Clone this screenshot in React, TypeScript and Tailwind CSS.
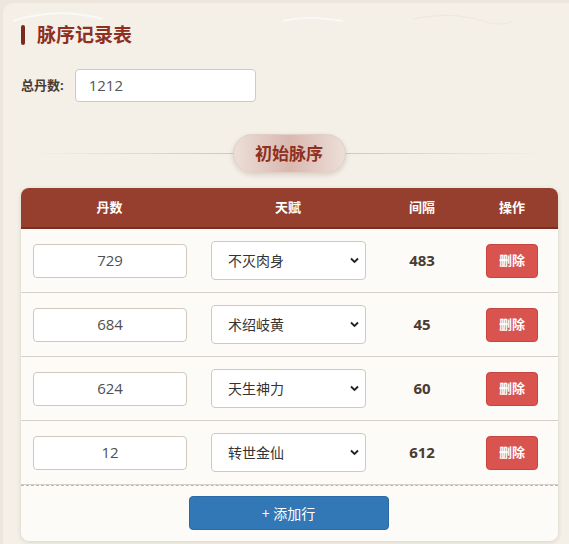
import React from "react";

const rows = [
  { dan: "729", talent: "不灭肉身", gap: "483" },
  { dan: "684", talent: "术绍岐黄", gap: "45" },
  { dan: "624", talent: "天生神力", gap: "60" },
  { dan: "12", talent: "转世金仙", gap: "612" },
];

export default function App() {
  const font = { fontFamily: '"Open Sans", "Noto Sans CJK SC", sans-serif' };
  return (
    <div className="w-[569px] h-[544px] overflow-hidden bg-[#ece6dc]" style={font}>
      <div className="relative ml-[3px] mt-[3px] h-[560px] rounded-tl-[10px] bg-[#f4f0e8] pl-[18px] pr-[9px] pt-[21px]">
        <svg className="absolute left-0 top-0" width="566" height="40" viewBox="0 0 566 40" fill="none">
          <path d="M10 18 C 40 8, 70 8, 100 16" stroke="#ffffff" strokeOpacity="0.6" strokeWidth="2" />
          <path d="M410 16 C 440 10, 460 12, 480 18 C 490 22, 500 22, 510 18" stroke="#ebe3d8" strokeOpacity="0.7" strokeWidth="1.2" />
          <path d="M280 18 C 300 13, 320 15, 340 18" stroke="#ffffff" strokeOpacity="0.5" strokeWidth="2" />
        </svg>
        <div className="relative flex items-center gap-[12px]">
          <div className="w-[4px] h-[20px] rounded-[2px] bg-[#7a2c1c]" />
          <div className="text-[19px] font-bold text-[#8e2f1f] leading-[22px]">脉序记录表</div>
        </div>
        <div className="relative mt-[23px] flex items-center gap-[11px]">
          <span className="text-[13px] font-bold text-[#4a3b30]">总丹数:</span>
          <div className="w-[181px] h-[33px] rounded-[4px] border border-[#d2c9bd] bg-white flex items-center pl-[13px] text-[15px] text-[#555]">
            1212
          </div>
        </div>
        <div className="relative mt-[32px] flex items-center justify-center h-[39px]">
          <div className="absolute left-[10px] right-[14px] top-[19px] h-px bg-gradient-to-r from-transparent via-[#cdb9a8] to-transparent" />
          <div className="relative w-[113px] h-[39px] rounded-full border border-[#dfcfc5] bg-gradient-to-r from-[#ecdfd7] via-[#d9b8b0] to-[#ecdfd7] shadow-[0_2px_5px_rgba(120,70,50,0.2)] flex items-center justify-center text-[17px] font-bold text-[#8e2f1f] -ml-[3px]">
            初始脉序
          </div>
        </div>
        <div className="mt-[15px] w-[537px] rounded-[8px] bg-[#fdfbf8] shadow-[0_1px_4px_rgba(100,70,40,0.18)] overflow-hidden">
          <div className="grid grid-cols-[177px_180px_88px_92px] h-[41px] items-center bg-[#963f2e] text-white text-[13px] font-bold border-b-2 border-[#7a2e20]">
            <div className="text-center">丹数</div>
            <div className="text-center">天赋</div>
            <div className="text-center">间隔</div>
            <div className="text-center">操作</div>
          </div>
          {rows.map((r, i) => (
            <div
              key={i}
              className="grid grid-cols-[177px_180px_88px_92px] h-[64px] items-center border-b border-[#d8d0c6]"
            >
              <div className="pl-[12px]">
                <div className="w-[154px] h-[34px] rounded-[4px] border border-[#d2c9bd] bg-white flex items-center justify-center text-[15px] text-[#4f4f4f]">
                  {r.dan}
                </div>
              </div>
              <div className="pl-[13px]">
                <div className="relative w-[155px] h-[39px] rounded-[4px] border border-[#d2c9bd] bg-white flex items-center pl-[16px] text-[14px] text-[#333]">
                  {r.talent}
                  <svg className="absolute right-[6px] top-[15px]" width="9" height="7" viewBox="0 0 9 7">
                    <path d="M1 1.5 L4.5 5 L8 1.5" stroke="#222" strokeWidth="1.8" fill="none" />
                  </svg>
                </div>
              </div>
              <div className="text-center text-[15px] font-bold text-[#4a3b30]">{r.gap}</div>
              <div className="pl-[20px]">
                <div className="w-[52px] h-[34px] rounded-[4px] bg-[#d9534f] border border-[#c9433f] flex items-center justify-center text-[13px] font-bold text-white">
                  删除
                </div>
              </div>
            </div>
          ))}
          <div className="border-t border-dashed border-[#bdb5aa] h-[56px] flex justify-center pt-[10px]">
            <div className="w-[200px] h-[34px] rounded-[4px] bg-[#3277b6] border border-[#2a6aa6] flex items-center justify-center text-[14px] text-white -ml-[2px]">
              + 添加行
            </div>
          </div>
        </div>
      </div>
    </div>
  );
}
